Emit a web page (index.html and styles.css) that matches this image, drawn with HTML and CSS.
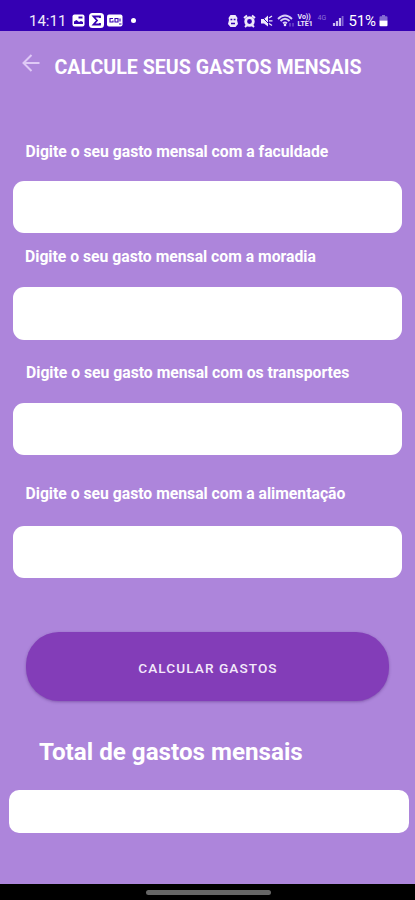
FILE: index.html
```html
<!DOCTYPE html>
<html lang="pt-BR">
<head>
<meta charset="utf-8">
<title>Calcule seus gastos mensais</title>
<link rel="stylesheet" href="styles.css">
</head>
<body>
<header class="status">
  <span class="clock">14:11</span>
  <svg class="picture" width="13" height="13" viewBox="0 0 13 13"><rect x=".5" y=".5" width="12" height="12" rx="2" fill="#fff"/><path d="M2 10V7.500l2.500-1.500 2.500 2 2-1 2 1v2z" fill="#3500b3"/><rect x="6.500" y="2.500" width="4" height="2" fill="#3500b3"/></svg>
  <svg class="sigma" width="15" height="15" viewBox="0 0 15 15"><rect width="15" height="15" rx="3.500" fill="#fff"/><path d="M11 5V3.500H4.500L8 7.500l-3.500 4H11V10" fill="none" stroke="#3500b3" stroke-width="1.800"/></svg>
  <svg class="go" width="16" height="13" viewBox="0 0 16 13"><rect y=".5" width="15.500" height="12" rx="2" fill="#fff"/><path d="M6 4.500H3v3.500h3V6.500M8 4.500h3V8H8zM12 10h2.500M13 4.500v3" fill="none" stroke="#3500b3" stroke-width="1.100"/></svg>
  <i class="dot"></i>
  <div class="right">
    <svg width="12" height="14" viewBox="0 0 12 14"><path d="M3.500 1h5l2 3-.5 2 1 4-2.500 3h-5L1 10l1-4-.5-2z" fill="#eee9fa"/><path d="M3.500 5.500h1.800M6.700 5.500h1.800M4 9.500h4" stroke="#3500b3" stroke-width="1.300"/></svg>
    <svg class="alarm" width="13" height="14" viewBox="0 0 13 14"><circle cx="6.500" cy="7.500" r="3.800" fill="none" stroke="#eee9fa" stroke-width="2.800"/><path d="M1 4l3-2.500M12 4L9 1.500M2 13l2.500-2.500M11 13l-2.500-2.500" fill="none" stroke="#eee9fa" stroke-width="1.900"/></svg>
    <svg class="mute" width="13" height="14" viewBox="0 0 13 14"><path d="M1 5h3l4-3.500v11L4 9.500H1z" fill="#eee9fa"/><path d="M1 2l10 10" stroke="#3500b3" stroke-width="1"/><path d="M9 4l3-2M9 6.800h3.500M9 9.500l3 2" stroke="#eee9fa" stroke-width="1.300"/></svg>
    <svg class="wifi" width="18" height="14" viewBox="0 0 18 14"><path d="M1 5Q8 -2 15 5M3.500 7Q8 2.500 12.500 7M6 9.300q2-1.600 4 0" fill="none" stroke="#d9cdf5" stroke-width="1.800"/><circle cx="8" cy="11" r="1.300" fill="#eee9fa"/><path d="M13 12.500V9M16 9v3.500" stroke="#8c70d5" stroke-width="1"/></svg>
    <span class="lte"><b>Vo))</b><b>LTE1</b></span>
    <span class="net">4G</span>
    <svg class="signal" width="12" height="13" viewBox="0 0 12 13"><path d="M2 12v-3M5 12V7M8 12V4" stroke="#cbbaf0" stroke-width="2.200"/><path d="M10.600 12V2" stroke="#8063d0" stroke-width="1.800"/></svg>
    <span class="percent">51%</span>
    <svg width="9" height="13" viewBox="0 0 9 13"><path d="M3 1h3v1.200h1.500q1 0 1 1v3.300h-8V3.200q0-1 1-1H3z" fill="#8469d3"/><path d="M.5 6.500h8v4.800q0 1-1 1h-6q-1 0-1-1z" fill="#fff"/></svg>
  </div>
</header>
<main>
  <div class="bar">
    <svg width="18" height="18" viewBox="0 0 18 18"><path d="M17.500 9H1.500M9.500 1L1.500 9l8 8" fill="none" stroke="#dfc9f6" stroke-width="2"/></svg>
    <h1>CALCULE SEUS GASTOS MENSAIS</h1>
  </div>
  <form>
    <label for="faculdade">Digite o seu gasto mensal com a faculdade</label>
    <input id="faculdade">
    <label class="l2" for="moradia">Digite o seu gasto mensal com a moradia</label>
    <input id="moradia">
    <label class="l3" for="transportes">Digite o seu gasto mensal com os transportes</label>
    <input id="transportes">
    <label class="l4" for="alimentacao">Digite o seu gasto mensal com a alimentação</label>
    <input id="alimentacao">
    <button type="button">CALCULAR GASTOS</button>
  </form>
  <h2>Total de gastos mensais</h2>
  <div class="total"></div>
</main>
<footer><i></i></footer>
</body>
</html>
```
FILE: styles.css
```css
* { box-sizing: border-box; }
body {
  margin: 0;
  width: 415px;
  height: 900px;
  display: flex;
  flex-direction: column;
  overflow: hidden;
  background: #ad85db;
  color: #fff;
  font-family: Roboto, sans-serif;
}
.status {
  height: 31px;
  flex: none;
  display: flex;
  align-items: center;
  padding: 10px 27.5px 0 29px;
  background: #3500b3;
  line-height: 20px;
}
.clock { width: 42px; font-size: 15px; color: #eee9fa; }
.picture { margin-left: 1px; }
.sigma { margin-left: 4px; }
.go { margin-left: 3px; }
.dot { width: 5px; height: 5px; border-radius: 50%; background: #fff; margin-left: 8px; }
.right { margin-left: auto; display: flex; align-items: center; }
.alarm { margin-left: 4px; }
.mute { margin-left: 4px; }
.wifi { margin-left: 4px; }
.lte { width: 17px; margin-left: 3px; display: flex; flex-direction: column; font-size: 7px; line-height: 6.5px; color: #eee9fa; }
.net { width: 11px; margin: -6px 0 0 3px; font-size: 7px; line-height: 8px; color: #8c70d5; }
.signal { margin-left: 3px; }
.percent { width: 30px; margin-left: 5px; font-size: 15px; letter-spacing: -.2px; }
main { height: 853px; flex: none; display: flex; flex-direction: column; }
.bar { display: flex; align-items: center; height: 24px; margin: 24.5px 0 0 22px; }
.bar svg { margin-top: -10px; }
h1 { margin: 0 0 0 14.5px; font-size: 19.6px; line-height: 24px; font-weight: 700; white-space: nowrap; }
form { display: flex; flex-direction: column; padding: 62.5px 13px 0 12.5px; }
label { height: 20px; margin-left: 13px; font-size: 15.73px; line-height: 20px; font-weight: 700; white-space: nowrap; }
input { height: 52.5px; margin: 18.5px 0 0; padding: 0 16px; border: 0; border-radius: 11px; background: #fff; font: 16px Roboto, sans-serif; }
.l2 { margin: 14px 0 1.5px 12.5px; }
.l3 { margin-top: 23.5px; margin-left: 13.5px; }
.l3 + input { margin-top: 19.5px; }
.l4 { margin-top: 29px; }
.l4 + input { margin-top: 21.5px; }
button {
  width: 363px;
  height: 69px;
  margin: 53.5px 0 0 13.5px;
  padding: 3px 0 0 1px;
  border: 0;
  border-radius: 33px;
  background: #833db8;
  color: #f4e9fb;
  box-shadow: 0 1px 3px rgba(65, 25, 105, .4);
  font: 500 13.6px/20px Roboto, sans-serif;
  letter-spacing: 1.08px;
}
h2 { margin: 36px 0 0 39px; font-size: 24.2px; line-height: 30px; font-weight: 700; white-space: nowrap; }
.total { height: 43.5px; margin: 23px 6px 0 9px; border-radius: 10px; background: #fff; }
footer { height: 16px; flex: none; background: #000; padding-top: 6px; }
footer i { display: block; width: 125px; height: 5px; margin-left: 145.5px; border-radius: 3px; background: #666; }
```
